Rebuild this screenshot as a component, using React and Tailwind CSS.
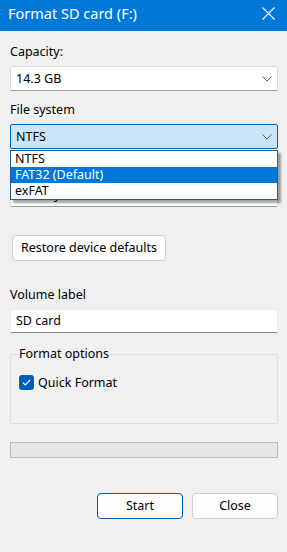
import React from "react";

function Chevron() {
  return (
    <svg width="10" height="6" viewBox="0 0 10 6" className="shrink-0">
      <path d="M0.5 0.5 L5 5 L9.5 0.5" fill="none" stroke="#606060" strokeWidth="1" />
    </svg>
  );
}

export default function App() {
  return (
    <div className="w-[287px] h-[552px] bg-[#f0f0f0] text-[12.5px] text-black font-['Noto_Sans',sans-serif] overflow-hidden">
      <div className="h-[31px] bg-[#0078d7] flex items-start justify-between pl-[8px] pr-[12px]">
        <div className="text-white text-[14.5px] leading-[20px] mt-[3px]">Format SD card (F:)</div>
        <svg width="13" height="13" viewBox="0 0 13 13" className="mt-[7px]">
          <path d="M0.5 0.5 L12.5 12.5 M12.5 0.5 L0.5 12.5" stroke="#ffffff" strokeWidth="1.1" fill="none" />
        </svg>
      </div>

      <div className="pl-[10px] pr-[9px] flex flex-col">
        <div className="mt-[12px] leading-[18px]">Capacity:</div>
        <div className="mt-[5px] h-[25px] bg-white border border-[#d9d9d9] border-b-[#9a9a9a] rounded-[2px] flex items-center justify-between pl-[5px] pr-[5px]">
          <span className="leading-[18px]">14.3 GB</span>
          <Chevron />
        </div>

        <div className="mt-[10px] leading-[18px]">File system</div>
        <div className="relative mt-[5px]">
          <div className="h-[25px] bg-[#cce4f7] border border-[#0067c0] rounded-[2px] flex items-center justify-between pl-[5px] pr-[5px]">
            <span className="leading-[18px]">NTFS</span>
            <Chevron />
          </div>
          <div className="absolute left-0 right-0 top-[26px] z-10 bg-white border border-[#1f5f9f] shadow-[3px_3px_2px_rgba(0,0,0,0.35)] flex flex-col">
            <div className="h-[16px] leading-[16px] pl-[4px]">NTFS</div>
            <div className="h-[16px] leading-[16px] pl-[4px] bg-[#0078d7] text-white">FAT32 (Default)</div>
            <div className="h-[16px] leading-[16px] pl-[4px]">exFAT</div>
          </div>
        </div>

        <div className="mt-[10px] h-[18px] invisible" aria-hidden="true"></div>
        <div className="mt-[5px] h-[25px] bg-white border border-[#d9d9d9] border-b-[#9a9a9a] rounded-[2px] flex items-center justify-between pl-[5px] pr-[5px]">
          <span className="leading-[18px] pl-[38px]">y</span>
          <Chevron />
        </div>

        <div className="mt-[28px] flex">
          <button className="h-[26px] w-[154px] bg-[#fdfdfd] border border-[#d0d0d0] rounded-[4px] leading-[18px] ml-[2px]">
            Restore device defaults
          </button>
        </div>

        <div className="mt-[25px] leading-[18px]">Volume label</div>
        <div className="mt-[5px] h-[24px] bg-white border border-[#ececec] border-b-[#8a8a8a] rounded-[2px] flex items-center pl-[5px]">
          <span className="leading-[18px]">SD card</span>
        </div>

        <fieldset className="mt-[12px] border border-[#dcdcdc] pl-[7px] pr-[7px] pb-[33px]">
          <legend className="px-[1px] leading-[18px]">Format options</legend>
          <div className="mt-[12px] h-[15px] flex items-center gap-[4px] ml-[1px]">
            <div className="w-[15px] h-[15px] rounded-[3px] bg-[#005fb8] flex items-center justify-center">
              <svg width="9" height="7" viewBox="0 0 9 7">
                <path d="M0.8 3.6 L3.3 6 L8.2 0.8" fill="none" stroke="#ffffff" strokeWidth="1.1" />
              </svg>
            </div>
            <span className="leading-[15px]">Quick Format</span>
          </div>
        </fieldset>

        <div className="mt-[18px] h-[16px] bg-[#e6e6e6] border border-[#bcbcbc]"></div>

        <div className="mt-[35px] flex justify-end gap-[9px]">
          <button className="h-[26px] w-[86px] bg-[#fdfdfd] border border-[#005fb8] rounded-[4px] leading-[18px]">Start</button>
          <button className="h-[26px] w-[86px] bg-[#fdfdfd] border border-[#d0d0d0] rounded-[4px] leading-[18px]">Close</button>
        </div>
      </div>
    </div>
  );
}
